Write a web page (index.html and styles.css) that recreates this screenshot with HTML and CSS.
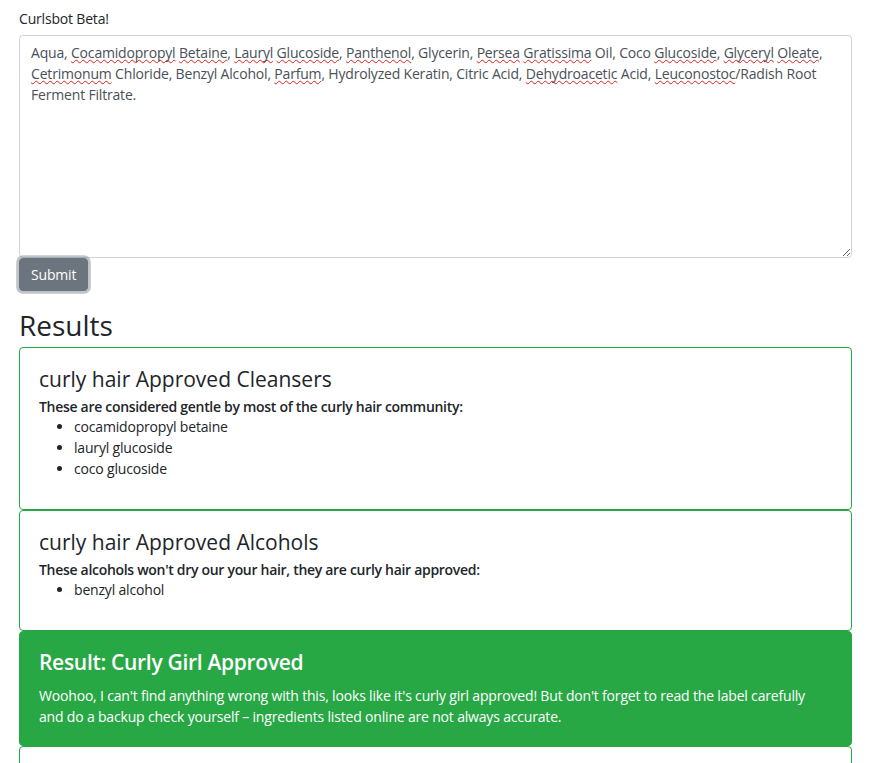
FILE: index.html
```html
<!DOCTYPE html>
<html lang="en">
<head>
  <meta charset="UTF-8" />
  <meta name="viewport" content="width=device-width, initial-scale=1.0" />
  <title>Curlsbot Beta</title>
  <link rel="stylesheet" href="styles.css">
</head>
<body>
  <div class="seite">
    <p class="kopf">Curlsbot Beta!</p>
    <form class="pruefen" onsubmit="return false;">
      <div class="eingabe" role="textbox" aria-multiline="true" contenteditable="true" spellcheck="false">Aqua, <span class="tippfehler">Cocamidopropyl</span> <span class="tippfehler">Betaine</span>, <span class="tippfehler">Lauryl</span> <span class="tippfehler">Glucoside</span>, <span class="tippfehler">Panthenol</span>, Glycerin, <span class="tippfehler">Persea</span> <span class="tippfehler">Gratissima</span> Oil, Coco <span class="tippfehler">Glucoside</span>, <span class="tippfehler">Glyceryl</span> <span class="tippfehler">Oleate</span>,<br><span class="tippfehler">Cetrimonum</span> Chloride, Benzyl Alcohol, <span class="tippfehler">Parfum</span>, Hydrolyzed Keratin, Citric Acid, <span class="tippfehler">Dehydroacetic</span> Acid, <span class="tippfehler">Leuconostoc</span>/Radish Root<br>Ferment Filtrate.</div>
      <button class="btn" type="submit">Submit</button>
    </form>

    <h2 class="ueberschrift">Results</h2>

    <div class="karte">
      <h4 class="karte-titel">curly hair Approved Cleansers</h4>
      <div class="karte-info">These are considered gentle by most of the curly hair community:</div>
      <ul class="liste">
        <li>cocamidopropyl betaine</li>
        <li>lauryl glucoside</li>
        <li>coco glucoside</li>
      </ul>
    </div>

    <div class="karte">
      <h4 class="karte-titel">curly hair Approved Alcohols</h4>
      <div class="karte-info">These alcohols won't dry our your hair, they are curly hair approved:</div>
      <ul class="liste">
        <li>benzyl alcohol</li>
      </ul>
    </div>

    <div class="karte ergebnis">
      <h4 class="karte-titel">Result: Curly Girl Approved</h4>
      <p class="karte-text">Woohoo, I can't find anything wrong with this, looks like it's curly girl approved! But don't forget to read the label carefully and do a backup check yourself – ingredients listed online are not always accurate.</p>
    </div>

    <div class="karte leer"></div>
  </div>
</body>
</html>
```

FILE: styles.css
```css
body {
  font-family: 'Open Sans', 'Noto Sans', sans-serif;
  font-size: 14px;
  line-height: 1.5;
  letter-spacing: -0.18px;
  color: #212529;
  background: #fff;
  margin: 0;
}
.seite {
  padding: 8px 18px 0 19px;
}
.kopf {
  margin: 0 0 6px;
}
.pruefen {
  margin-bottom: 18px;
}
.eingabe {
  box-sizing: border-box;
  height: 223px;
  padding: 6px 12px 6px 11px;
  border: 1px solid #ced4da;
  border-radius: 4px;
  color: #495057;
  overflow: auto;
  resize: vertical;
  outline: none;
}
.tippfehler {
  text-decoration: underline wavy #e0201b;
  text-decoration-thickness: 1px;
  text-underline-offset: 1px;
  text-decoration-skip-ink: none;
}
.btn {
  display: block;
  font-family: inherit;
  font-size: 14px;
  line-height: 1.5;
  letter-spacing: -0.18px;
  padding: 5px 11px;
  margin: 0;
  background: #6c757d;
  color: #fff;
  border: 1px solid #6c757d;
  border-radius: 4px;
  box-shadow: 0 0 0 2.8px rgba(130, 138, 145, 0.5);
  cursor: pointer;
}
.btn:hover { background: #5a6268; }
.ueberschrift {
  font-size: 28px;
  font-weight: 500;
  line-height: 1.2;
  letter-spacing: 0;
  margin: 0 0 4px;
}
.karte {
  border: 1px solid #28a745;
  border-radius: 4px;
  padding: 19px 19px 17.5px;
}
.karte-titel {
  font-size: 21px;
  font-weight: 500;
  line-height: 1.2;
  letter-spacing: 0;
  margin: 0 0 7px;
}
.karte-info {
  font-weight: 600;
  line-height: 1.2;
  letter-spacing: -0.3px;
}
.liste {
  margin: 0 0 12.5px;
  padding-left: 35px;
}
.ergebnis {
  background: #28a745;
  color: #fff;
  padding-top: 18px;
}
.ergebnis .karte-titel {
  font-weight: 600;
  letter-spacing: -0.3px;
  margin-bottom: 10.5px;
}
.karte-text {
  margin: 0;
}
.leer {
  height: 60px;
}
```
